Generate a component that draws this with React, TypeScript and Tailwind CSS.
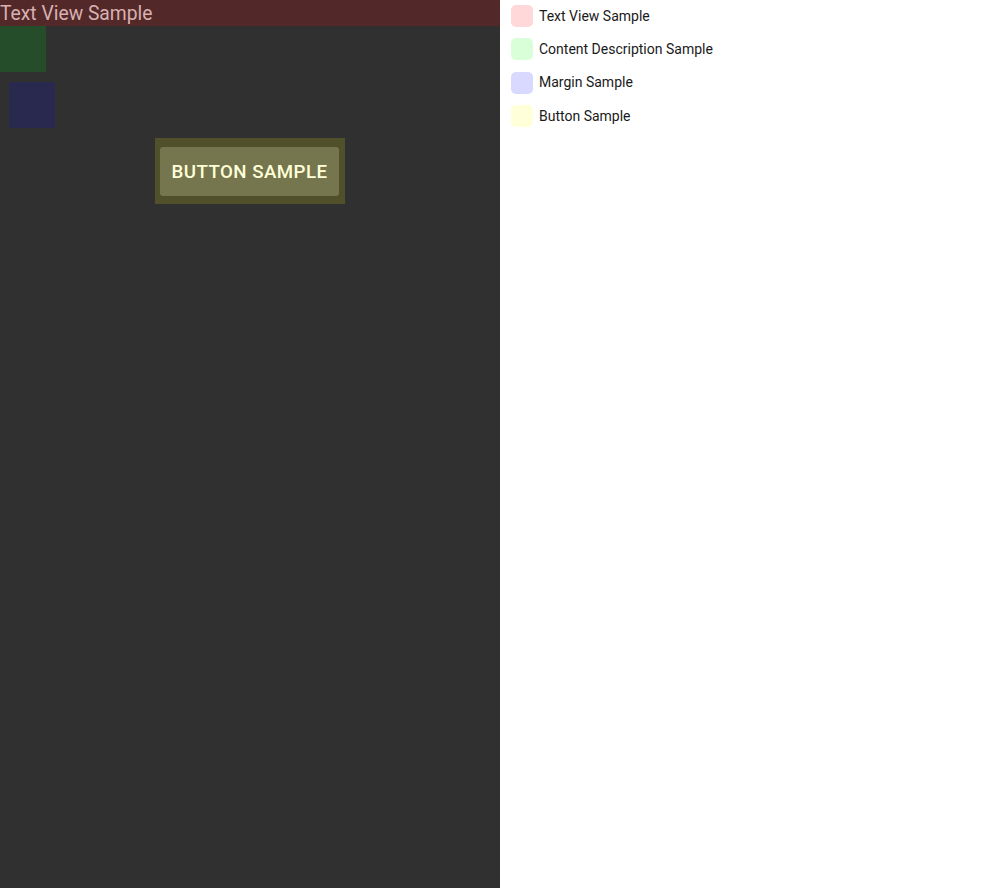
import React from "react";

const legend = [
  { label: "Text View Sample", color: "bg-[#ffd9d9]" },
  { label: "Content Description Sample", color: "bg-[#d9ffd9]" },
  { label: "Margin Sample", color: "bg-[#d9d9ff]" },
  { label: "Button Sample", color: "bg-[#ffffd9]" },
];

export default function App() {
  return (
    <div className="flex w-[1000px] h-[888px] bg-white" style={{ fontFamily: "Roboto, 'Noto Sans', sans-serif" }}>
      <div className="w-[500px] h-full bg-[#303030] flex flex-col">
        <div className="h-[26px] bg-[#532829] text-[#d8b1b1] text-[19.3px] leading-[28px] whitespace-nowrap overflow-hidden">
          Text View Sample
        </div>
        <div className="w-[46px] h-[46px] bg-[#264d29]" />
        <div className="w-[46px] h-[46px] bg-[#29294f] ml-[9px] mt-[10px]" />
        <div className="flex justify-center mt-[10px]">
          <div className="w-[190px] h-[66px] bg-[#50502b] pt-[9px] pb-[8px] pl-[5px] pr-[6px]">
            <div className="w-full h-full bg-[#75754e] rounded-[3px] flex items-center justify-center pt-[1px] text-[#ffffd9] text-[18.7px] font-medium tracking-[0.45px] whitespace-nowrap">
              BUTTON SAMPLE
            </div>
          </div>
        </div>
      </div>
      <div className="flex-1 flex flex-col pt-[5px] pl-[11px] gap-[11.4px]">
        {legend.map((l) => (
          <div key={l.label} className="flex items-center h-[22px]">
            <div className={`w-[22px] h-[22px] rounded-[5px] ${l.color}`} />
            <span className="ml-[6px] text-[14px] text-[#1a1a1a]">{l.label}</span>
          </div>
        ))}
      </div>
    </div>
  );
}
